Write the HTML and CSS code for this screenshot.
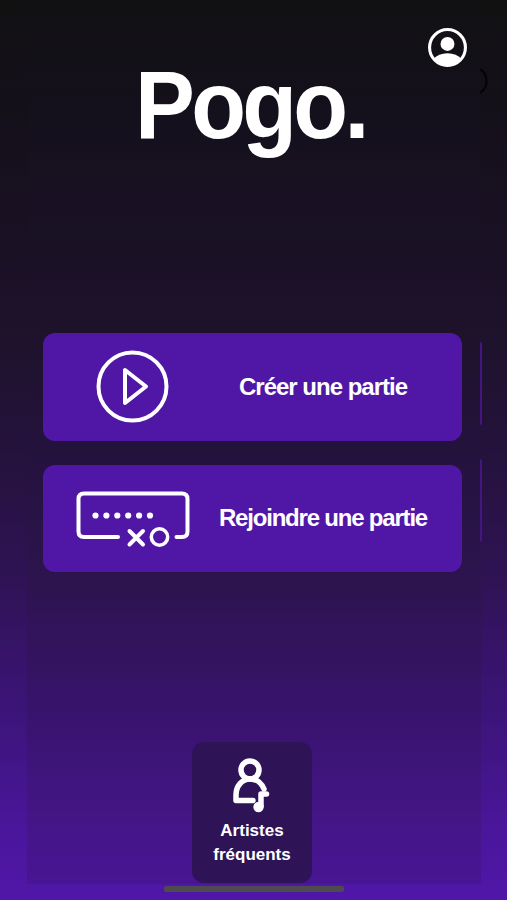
FILE: index.html
```html
<!DOCTYPE html>
<html lang="fr">
<head>
<meta charset="UTF-8">
<title>Pogo.</title>
<link rel="stylesheet" href="styles.css">
</head>
<body>
<div class="screen">
  <div class="panel">
    <div class="head">
      <svg class="profile" viewBox="0 0 40 40">
        <circle cx="20" cy="20" r="17.500" fill="none" stroke="#fff" stroke-width="3"/>
        <circle cx="20" cy="16.500" r="6.800" fill="#fff"/>
        <path d="M6.500 31C9.500 27.500 14 25.500 20 25.500S30.500 27.500 33.500 31C27 41 13 41 6.500 31Z" fill="#fff"/>
      </svg>
    </div>
    <h1>Pogo.</h1>
    <div class="actions">
      <a class="action">
        <span class="icon">
          <svg width="74" height="74" viewBox="0 0 74 74" fill="none" stroke="#fff" stroke-width="4">
            <circle cx="36.500" cy="36.500" r="34"/>
            <path d="M29 20V53L50 36.500Z" stroke-linejoin="round"/>
          </svg>
        </span>
        <span class="label create">Créer une partie</span>
      </a>
      <a class="action">
        <span class="icon">
          <svg width="114" height="60" viewBox="0 0 114 60" fill="none" stroke="#fff" stroke-width="4" stroke-linecap="round">
            <path d="M42 49H8Q2.500 49 2.500 43.500V11Q2.500 5.500 8 5.500H106Q111.500 5.500 111.500 11V43.500Q111.500 49 106 49H100.500"/>
            <path d="M19.500 27.500H75" stroke-width="6.200" stroke-dasharray="0 10.900"/>
            <path d="M53.500 43L67 56.500M67 43L53.500 56.500"/>
            <circle cx="83.500" cy="49" r="8.200" stroke-width="3.500"/>
          </svg>
        </span>
        <span class="label join">Rejoindre une partie</span>
      </a>
    </div>
    <a class="artists">
      <svg width="42" height="58" viewBox="0 0 42 58" fill="none" stroke="#fff" stroke-width="5.500" stroke-linecap="round" stroke-linejoin="round">
        <circle cx="19" cy="15" r="9"/>
        <path d="M22 45.500H5V40C5 31 11 24 19 24C25.500 24 30.500 28 33 34"/>
        <path d="M30 51V39H35.500"/>
        <circle cx="27.500" cy="52" r="5.200" fill="#fff" stroke="none"/>
      </svg>
      <span>Artistes<br>fréquents</span>
    </a>
  </div>
  <div class="home-bar"></div>
  <!-- edges of the next page -->
  <svg class="next-profile" viewBox="0 0 8 28" fill="none" stroke="#030305" stroke-width="2">
    <path d="M0 2Q6.500 6 6.500 14T0 26"/>
  </svg>
  <div class="next-card first"></div>
  <div class="next-card second"></div>
</div>
</body>
</html>
```

FILE: styles.css
```css
* {
    margin: 0;
    padding: 0;
    box-sizing: border-box;
}
body {
    font-family: "Liberation Sans", Arial, sans-serif;
    font-weight: bold;
    color: #fff;
}
.screen {
    position: relative;
    height: 900px;
    overflow: hidden;
    background: linear-gradient(#111112 0, #14101a 110px, #1e122b 330px, #26123f 470px, #2f1355 580px, #3d147b 720px, #4a169b 830px, #5017a8 900px);
}
.panel {
    width: 454px;
    height: 884px;
    margin-left: 27px;
    display: flex;
    flex-direction: column;
    align-items: center;
    background: linear-gradient(#111112 0, #14101c 110px, #1e122b 330px, #24123d 450px, #2d1450 590px, #38136c 710px, #421582 800px, #491594 884px);
}
.head {
    width: 100%;
    height: 68px;
    padding: 27px 13px 0 0;
    display: flex;
    justify-content: flex-end;
}
.profile {
    width: 41px;
    height: 41px;
}
h1 {
    height: 100px;
    margin-top: -13px;
    margin-right: 8px;
    line-height: 100px;
    font-size: 96px;
    letter-spacing: -4px;
    transform: scaleX(.935);
}
.actions {
    width: 419px;
    margin-top: 178px;
    display: flex;
    flex-direction: column;
    gap: 24px;
    margin-right: 3px;
}
.action {
    height: 107.5px;
    padding-left: 10px;
    display: flex;
    align-items: center;
    background: #5017a7;
    border-radius: 12px;
}
.icon {
    width: 160px;
    display: flex;
    justify-content: center;
}
.label {
    width: 220px;
    text-align: center;
    font-size: 24px;
    white-space: nowrap;
}
.create {
    letter-spacing: -1px;
}
.join {
    letter-spacing: -1.2px;
}
.artists {
    width: 120px;
    height: 141px;
    margin-top: auto;
    margin-bottom: 1px;
    margin-right: 4px;
    padding-top: 13px;
    display: flex;
    flex-direction: column;
    align-items: center;
    background: #2e1457;
    border-radius: 12px;
    font-size: 17px;
    line-height: 24px;
    text-align: center;
}
.artists span {
    margin-top: 6px;
}
.home-bar {
    width: 180px;
    height: 6px;
    margin: 2px 0 0 164px;
    background: #4d4a50;
    border-radius: 2px;
}
.next-profile {
    position: absolute;
    left: 480px;
    top: 67px;
    width: 8px;
    height: 28px;
}
.next-card {
    position: absolute;
    left: 480px;
    width: 2px;
    height: 83px;
    background: #431681;
    border-radius: 0 2px 2px 0;
}
.first {
    top: 342px;
}
.second {
    top: 459px;
}
```
